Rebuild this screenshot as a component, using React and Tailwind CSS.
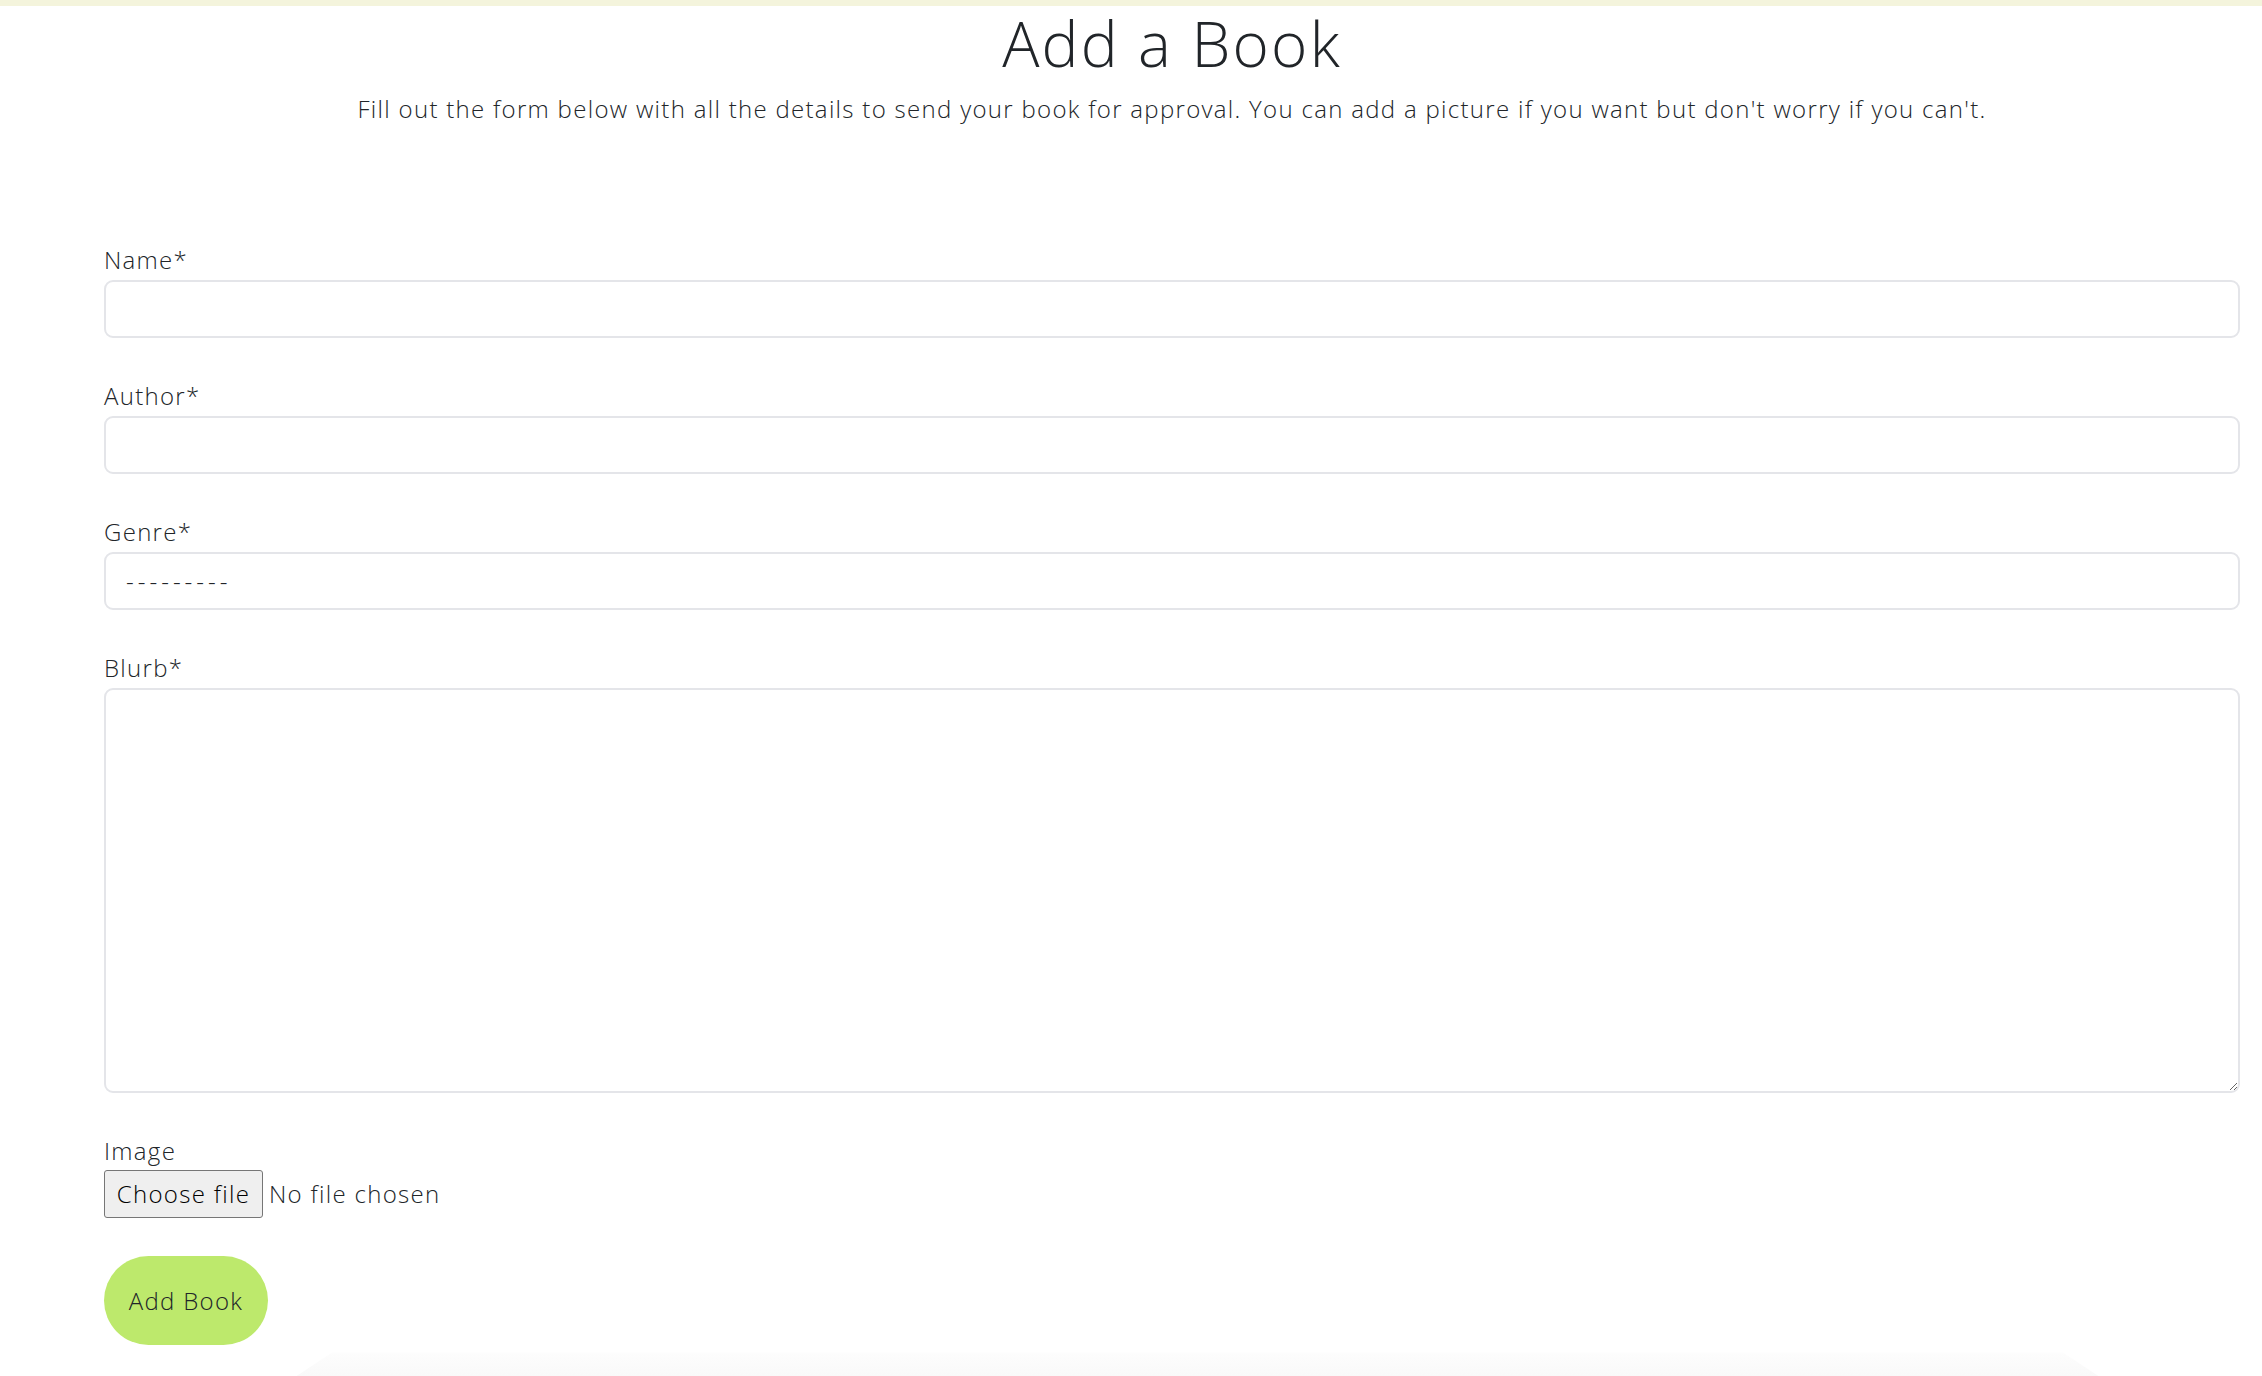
import React from 'react';

const Field = ({ label, children }) => (
  <div className="mb-[40px]">
    <label className="block mb-[2px] text-[24px] leading-[36px]">{label}</label>
    {children}
  </div>
);

const AddBook = () => {
  const inputClass =
    'block w-full h-[58px] px-[20px] bg-white border-2 border-[#e4e5e9] rounded-[9px] text-[24px] text-[#212529] outline-none';

  return (
    <div
      className="min-h-screen bg-white text-[#212529] font-light tracking-[1.3px]"
      style={{ fontFamily: '"Open Sans", Lato, sans-serif' }}
    >
      <div className="h-[6px] bg-[#f4f4dc]" />

      <div className="pl-[104px] pr-[22px]">
        <div className="text-center">
          <h1 className="text-[62px] leading-[1.2] font-light tracking-[2.2px]">Add a Book</h1>
          <p className="mt-[11px] text-[24px] leading-[36px]">
            Fill out the form below with all the details to send your book for approval. You can add a picture if you want but don't worry if you can't.
          </p>
        </div>

        {/* Form */}
        <form className="mt-[115px]" onSubmit={(e) => e.preventDefault()}>
          <Field label="Name*">
            <input type="text" className={inputClass} />
          </Field>

          <Field label="Author*">
            <input type="text" className={inputClass} />
          </Field>

          <Field label="Genre*">
            <div className={`${inputClass} flex items-center`}>
              <span className="tracking-[4px]">---------</span>
            </div>
          </Field>

          <Field label="Blurb*">
            <textarea
              className="block w-full h-[405px] p-[20px] bg-white border-2 border-[#e4e5e9] rounded-[9px] text-[24px] outline-none"
            />
          </Field>

          <div className="mb-[38px]">
            <label className="block mb-[1px] text-[24px] leading-[36px]">Image</label>
            <div className="flex items-center">
              <span className="flex items-center justify-center w-[159px] h-[48px] bg-[#efefef] border border-[#767676] rounded-[3px] text-[24px] text-black font-light">
                Choose file
              </span>
              <span className="ml-[6px] text-[24px]">No file chosen</span>
            </div>
          </div>

          <button
            type="submit"
            className="w-[164px] h-[89px] rounded-full bg-[#bde96c] text-[24px] text-[#212529] font-light tracking-[1.3px]"
          >
            Add Book
          </button>
        </form>
      </div>

      <div className="mt-[7px] ml-[296px] w-[1803px] h-[24px] bg-gradient-to-b from-[#fdfdfd] to-[#f9f9f9] [clip-path:polygon(2%_0,98%_0,100%_100%,0_100%)]" />
    </div>
  );
};

export default function App() {
  return <AddBook />;
}
